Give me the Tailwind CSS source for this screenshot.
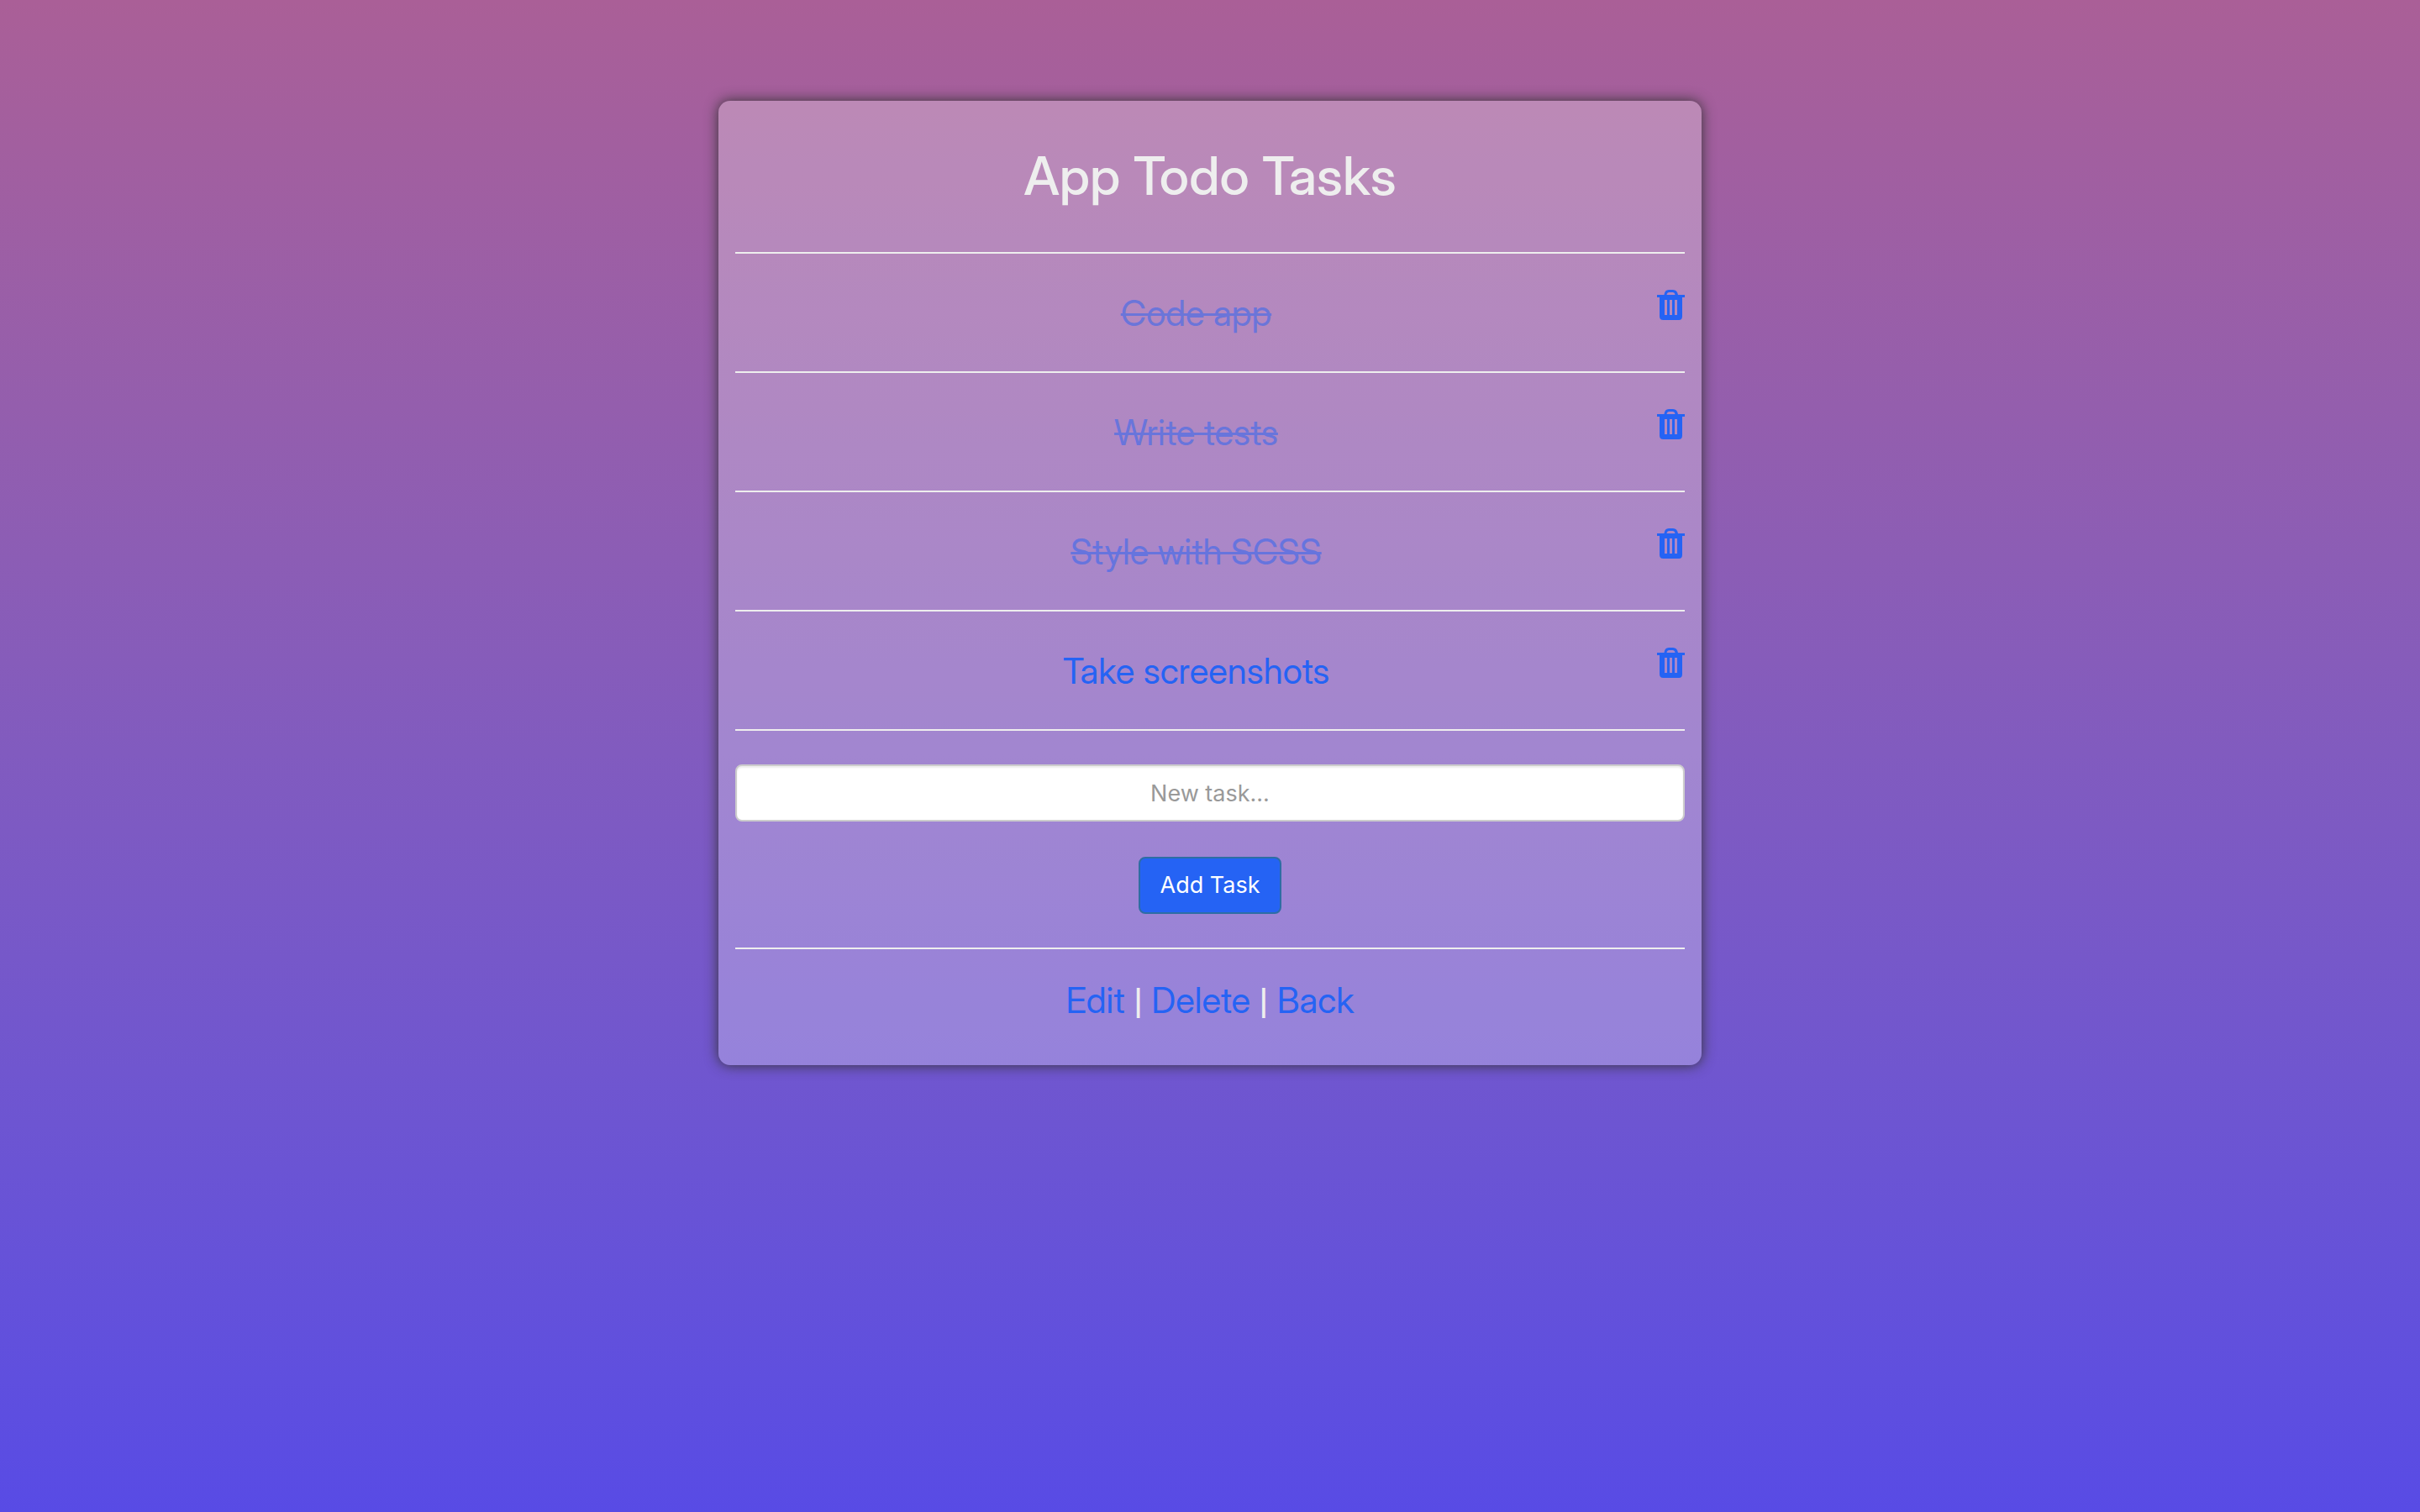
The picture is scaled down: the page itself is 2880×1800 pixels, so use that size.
<!DOCTYPE html>
<html lang="en">
<head>
<meta charset="utf-8">
<meta name="viewport" content="width=device-width, initial-scale=1">
<title>App Todo Tasks</title>
<script src="https://cdn.jsdelivr.net/npm/@tailwindcss/browser@4"></script>
</head>
<body class="min-h-screen bg-linear-to-b from-[#aa5f97] to-[#584be5] px-5 py-[120px] font-['Inter_Display',Inter,sans-serif] text-[42px] leading-[60px] text-[#eeeeee]">
<svg class="hidden" aria-hidden="true">
  <symbol id="trash" viewBox="0 0 33 36">
    <path fill="currentColor" fill-rule="evenodd" d="M0 6H8.500Q9 0 14 0H19Q24 0 25 6H33V9H30V31.500Q30 36 26 36H7.500Q3 36 3 31.500V9H0ZM11.500 6H21.500Q21 3 18.500 3H14.500Q12 3 11.500 6ZM9 12V30H12V12ZM15 12V30H18V12ZM21 12V30H24V12Z"/>
  </symbol>
</svg>
<main class="mx-auto w-full max-w-[1170px] rounded-[14px] bg-white/26 px-5 text-center shadow-[0_0_16px_#333333]">
  <h1 class="border-b-2 border-[#eeeeee] pt-[49px] pb-[51px] text-[63px] leading-[80px] font-medium">App Todo Tasks</h1>
  <ul>
    <li class="flex items-start border-b-2 border-[#eeeeee] py-10">
      <a href="#" class="flex-1 pt-[2px] leading-[58px] text-[#2563f4] line-through decoration-3 opacity-50">Code app</a>
      <button type="button" aria-label="Delete Code app" class="mt-[3px] text-[#2563f4]"><svg class="h-9 w-[33px]" aria-hidden="true"><use href="#trash"/></svg></button>
    </li>
    <li class="flex items-start border-b-2 border-[#eeeeee] py-10">
      <a href="#" class="flex-1 pt-[2px] leading-[58px] text-[#2563f4] line-through decoration-3 opacity-50">Write tests</a>
      <button type="button" aria-label="Delete Write tests" class="mt-[3px] text-[#2563f4]"><svg class="h-9 w-[33px]" aria-hidden="true"><use href="#trash"/></svg></button>
    </li>
    <li class="flex items-start border-b-2 border-[#eeeeee] py-10">
      <a href="#" class="flex-1 pt-[2px] leading-[58px] text-[#2563f4] line-through decoration-3 opacity-50">Style with SCSS</a>
      <button type="button" aria-label="Delete Style with SCSS" class="mt-[3px] text-[#2563f4]"><svg class="h-9 w-[33px]" aria-hidden="true"><use href="#trash"/></svg></button>
    </li>
    <li class="flex items-start border-b-2 border-[#eeeeee] py-10">
      <a href="#" class="flex-1 pt-[2px] leading-[58px] text-[#2563f4]">Take screenshots</a>
      <button type="button" aria-label="Delete Take screenshots" class="mt-[3px] text-[#2563f4]"><svg class="h-9 w-[33px]" aria-hidden="true"><use href="#trash"/></svg></button>
    </li>
  </ul>
  <form class="flex flex-col items-center gap-[42px] border-b-2 border-[#eeeeee] py-10">
    <input type="text" aria-label="New task" placeholder="New task..." class="h-[68px] w-full rounded-lg border-2 border-[#cccccc] bg-white px-6 text-center font-[Inter,sans-serif] text-[27px] text-[#555555] shadow-[inset_0_2px_2px_rgba(0,0,0,0.075)] placeholder:text-[#999999]">
    <button type="button" class="h-[68px] rounded-lg border-2 border-[#2e6da4] bg-[#2563f4] px-6 font-[Inter,sans-serif] text-[27px] leading-[40px] text-white">Add Task</button>
  </form>
  <nav class="pt-[31px] pb-[46px]">
    <a href="#" class="text-[#2563f4]">Edit</a> <span class="font-[Roboto,sans-serif] font-bold">|</span> <a href="#" class="text-[#2563f4]">Delete</a> <span class="font-[Roboto,sans-serif] font-bold">|</span> <a href="#" class="text-[#2563f4]">Back</a>
  </nav>
</main>
</body>
</html>
